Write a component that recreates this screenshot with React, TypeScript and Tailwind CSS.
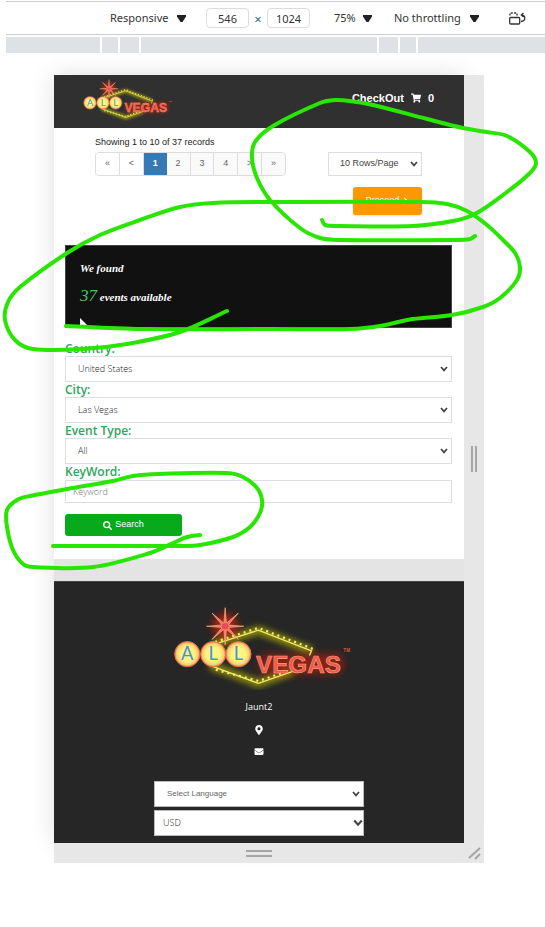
import React, { useId } from "react";
import { FaSearch, FaShoppingCart, FaMapMarkerAlt, FaEnvelope, FaChevronRight } from "react-icons/fa";

type Point = [number, number];

const arial = "font-['Liberation_Sans',Arial,sans-serif]";
const openSans = "font-['Open_Sans',sans-serif]";

function Logo({ className }: { className: string }) {
  const id = useId();
  const yellow = `${id}-yellow`;
  const red = `${id}-red`;
  const bulb = `${id}-bulb`;
  const rays = [0, 45, 90, 135, 180, 225, 270, 315];
  return (
    <svg viewBox="40 20 540 250" className={className} role="img" aria-label="All Vegas">
      <defs>
        <filter id={yellow} x="-20%" y="-30%" width="140%" height="160%">
          <feGaussianBlur stdDeviation="9" />
        </filter>
        <filter id={red} x="-50%" y="-70%" width="200%" height="240%">
          <feGaussianBlur stdDeviation="13" />
        </filter>
        <radialGradient id={bulb}>
          <stop offset="0.55" stopColor="#fdf582" />
          <stop offset="0.85" stopColor="#f8cf70" />
          <stop offset="1" stopColor="#ec7a4c" />
        </radialGradient>
      </defs>
      <g fill="none" stroke="#c6c800" strokeWidth="22" opacity="0.7" filter={`url(#${yellow})`}>
        <path d="M160 133 296 90 456 152" />
        <path d="M150 196 296 250 400 214" />
      </g>
      <circle cx="196" cy="78" r="36" fill="#e02010" opacity="0.8" filter={`url(#${red})`} />
      <rect x="300" y="162" width="250" height="58" rx="20" fill="#d8200c" opacity="0.55" filter={`url(#${red})`} />
      <g fill="none" stroke="#f3e96f" strokeWidth="4">
        <path d="M160 133 296 90 456 152 450 166" />
        <path d="M150 196 296 250 400 214" />
      </g>
      <g fill="none" stroke="#f7e96b" strokeWidth="7" strokeDasharray="6 12">
        <path d="M166 125 296 83 460 146" />
        <path d="M168 209 296 243 388 212" />
      </g>
      {rays.map((angle) => (
        <path
          key={angle}
          d="M192 72 196 22 200 72Z"
          transform={`rotate(${angle} 196 78)`}
          fill="#e8766a"
          stroke="#f0b880"
          strokeWidth="2"
        />
      ))}
      <circle cx="196" cy="78" r="10" fill="#f0465a" />
      {[82, 160, 236].map((cx, i) => (
        <g key={cx}>
          <circle cx={cx} cy="162" r="38" fill={`url(#${bulb})`} stroke="#e8704a" strokeWidth="3" />
          <text x={cx} y="181" textAnchor="middle" fontSize="55" fontFamily="Lato, sans-serif" fill="#4a90dc">
            {"ALL"[i]}
          </text>
        </g>
      ))}
      <text
        x="289"
        y="219"
        fontSize="73"
        fontWeight="700"
        fontFamily="'Liberation Sans', Arial, sans-serif"
        fill="#f4584a"
        stroke="#f2a07c"
        strokeWidth="2"
      >
        VEGAS
      </text>
      <text x="552" y="156" fontSize="14" fontWeight="700" fontFamily="'Liberation Sans', Arial, sans-serif" fill="#d8543c">
        TM
      </text>
    </svg>
  );
}

function Chevron({ className }: { className: string }) {
  return (
    <svg viewBox="0 0 8 6" className={`pointer-events-none absolute ${className}`} fill="none" stroke="#444" aria-hidden="true">
      <path d="M1 1 4 4.400 7 1" strokeWidth="1.700" />
    </svg>
  );
}

function Triangle() {
  return (
    <svg viewBox="0 0 9 7" className="h-[7px] w-[9px]" aria-hidden="true">
      <path d="M0 0H9V1.500L5.500 7H3.500L0 1.500Z" fill="#202124" />
    </svg>
  );
}

function Toolbar() {
  const box = "h-5 w-[43px] rounded-sm border border-[#dadce0] bg-white text-center outline-none";
  return (
    <div className="ml-1.5 flex h-[34px] items-center border-y border-t-[#cbcdd1] border-b-[#cbcdd1] pl-[104px] font-['Noto_Sans',sans-serif] text-[11px] text-[#333]">
      <button className="flex w-24 items-center gap-2 whitespace-nowrap">
        <span className="w-[59px] text-left">Responsive</span>
        <Triangle />
      </button>
      <input aria-label="Width" defaultValue="546" className={box} />
      <span className="w-[18px] pt-1 text-center text-[13px] text-[#2d6a8a]">×</span>
      <input aria-label="Height" defaultValue="1024" className={box} />
      <button className="ml-6 flex w-[60px] items-center gap-[5px]">
        <span className="w-6 text-left">75%</span>
        <Triangle />
      </button>
      <button className="flex w-[115px] items-center gap-[5px] whitespace-nowrap">
        <span className="w-[71px] text-left">No throttling</span>
        <Triangle />
      </button>
      <button aria-label="Rotate">
        <svg viewBox="0 0 17 13" className="h-[13px] w-[17px]" fill="none" stroke="#333" strokeWidth="1.300">
          <rect x="0.700" y="5.500" width="10" height="6.500" rx="1" />
          <path d="M1 3.500V1H8V3.500" strokeDasharray="2 1.300" />
          <path d="M12 9.500C17 9 17 3.500 12.500 3M14.500 1 12.300 3 14.500 5" />
        </svg>
      </button>
    </div>
  );
}

function Ruler() {
  const tick = "w-0.5 bg-white";
  return (
    <div className="mt-0.5 ml-1.5 flex h-4 bg-[#dee1e6]">
      <div className="w-[94px]" />
      <div className={tick} />
      <div className="w-4" />
      <div className={tick} />
      <div className="w-[19px]" />
      <div className={tick} />
      <div className="grow" />
      <div className={tick} />
      <div className="w-[19px]" />
      <div className={tick} />
      <div className="w-4" />
      <div className={tick} />
      <div className="w-[127px]" />
    </div>
  );
}

function Pagination() {
  const items = ["«", "<", "1", "2", "3", "4", ">", "»"];
  return (
    <nav aria-label="Pages" className="flex h-6 w-[191px] overflow-hidden rounded border border-[#ddd] text-[9px] text-[#666]">
      {items.map((item, i) => (
        <button
          key={item}
          className={
            item === "1"
              ? "flex-1 bg-[#337ab7] font-bold text-white"
              : i < 2
                ? "flex-1 border-r border-[#ddd] bg-white"
                : "flex-1 border-r border-[#ddd] bg-[#fafafa] last:border-r-0"
          }
        >
          {item}
        </button>
      ))}
    </nav>
  );
}

function SelectField({ id, label, value }: { id: string; label: string; value: string }) {
  return (
    <div>
      <label htmlFor={id} className="block h-[15px] text-[12px] leading-4 font-semibold text-[#2fa55a]">
        {label}
      </label>
      <div className="relative">
        <select
          id={id}
          className="block h-[26px] w-full appearance-none border border-[#dcdce6] bg-white px-3 text-[9px] font-light text-[#222] outline-none"
        >
          <option>{value}</option>
        </select>
        <Chevron className="top-[10px] right-1 h-[6px] w-2" />
      </div>
    </div>
  );
}

function curve(points: Point[]) {
  let d = `M${points[0][0]} ${points[0][1]}`;
  for (let i = 0; i < points.length - 1; i++) {
    const a = points[Math.max(i - 1, 0)];
    const b = points[i];
    const c = points[i + 1];
    const e = points[Math.min(i + 2, points.length - 1)];
    const size = Math.hypot(c[0] - b[0], c[1] - b[1]) / 3;
    const t1 = Math.hypot(c[0] - a[0], c[1] - a[1]);
    const t2 = Math.hypot(e[0] - b[0], e[1] - b[1]);
    d += `C${b[0] + ((c[0] - a[0]) / t1) * size} ${b[1] + ((c[1] - a[1]) / t1) * size} ${c[0] - ((e[0] - b[0]) / t2) * size} ${c[1] - ((e[1] - b[1]) / t2) * size} ${c[0]} ${c[1]}`;
  }
  return d;
}

const strokes: Point[][] = [
  [[322, 220], [325, 225], [340, 226], [413, 226], [453, 221], [475, 214], [507, 192], [530, 173], [536, 163], [530, 152], [507, 136], [487, 132], [463, 128], [427, 119], [373, 105], [350, 101], [335, 100], [320, 103], [273, 126], [255, 142], [252, 158], [257, 178], [270, 200], [300, 228], [320, 238], [340, 240], [453, 240], [470, 239], [475, 236]],
  [[227, 311], [180, 332], [127, 344], [83, 349], [33, 349], [15, 340], [5, 320], [8, 302], [20, 287], [67, 253], [100, 235], [140, 220], [180, 207], [213, 203], [280, 202], [420, 202], [447, 204], [467, 211], [487, 225], [503, 240], [515, 253], [520, 267], [517, 280], [500, 298], [483, 307], [452, 315], [413, 319], [380, 326], [350, 329], [270, 329], [147, 329], [66, 326]],
  [[200, 535], [187, 537], [173, 543], [150, 553], [93, 567], [33, 567], [23, 564], [13, 550], [7, 527], [7, 510], [17, 500], [30, 496], [73, 488], [113, 481], [133, 476], [160, 474], [227, 473], [243, 477], [257, 488], [262, 500], [260, 513], [250, 527], [233, 537], [200, 545], [180, 546], [53, 546]],
];

function Marker() {
  return (
    <svg viewBox="0 0 545 927" className="pointer-events-none absolute top-0 left-0 h-[927px] w-[545px]" aria-hidden="true">
      {strokes.map((points, i) => (
        <path key={i} d={curve(points)} fill="none" stroke="#28e600" strokeWidth="4" strokeLinecap="round" strokeLinejoin="round" />
      ))}
    </svg>
  );
}

function Device() {
  return (
    <div className={`min-w-0 flex-1 bg-white shadow-[0_0_24px_rgba(0,0,0,0.12)] ${arial}`}>
      <header className="flex h-[53px] items-start justify-between bg-[#303030] pr-[30px] pl-[29px] text-white">
        <Logo className="mt-1 h-[42px] w-[90px]" />
        <a href="#checkout" className="mt-[15px] flex items-center gap-[7px] text-[11px] leading-4 font-bold">
          CheckOut
          <FaShoppingCart className="h-[10px] w-[10px]" />
          <span>0</span>
        </a>
      </header>

      <main className="pr-3 pl-[11px]">
        <div className="flex items-end justify-between pt-2 pr-[30px] pl-[30px]">
          <div>
            <p className="mb-1 text-[9px] leading-3 text-[#222]">Showing 1 to 10 of 37 records</p>
            <Pagination />
          </div>
          <div className="relative">
            <select
              aria-label="Rows per page"
              className="block h-6 w-[94px] appearance-none border border-[#dcdce6] bg-white px-[11px] text-[9px] text-[#444] outline-none"
            >
              <option>10 Rows/Page</option>
            </select>
            <Chevron className="top-[9px] right-1 h-[6px] w-2" />
          </div>
        </div>
        <div className="flex justify-end pt-[11px] pr-[30px]">
          <button className="flex h-7 w-[69px] items-center justify-center gap-1 rounded-[3px] bg-[#ff9800] text-[9px] text-white shadow-sm">
            Proceed
            <FaChevronRight className="h-2 w-[6px]" />
          </button>
        </div>

        <section className="relative mt-[30px] h-[83px] border border-[#444] bg-[#111] px-[14px] pt-[14px] font-['Liberation_Serif',serif] text-[11px] text-white italic">
          <p className="leading-4 font-bold">We found</p>
          <p className="mt-2 leading-6 font-bold">
            <span className="text-[17px] font-normal text-[#4fc45a]">37</span> events available
          </p>
          <svg viewBox="0 0 10 9" className="absolute bottom-0 left-[14px] h-[9px] w-[10px]" aria-hidden="true">
            <path d="M0 0 9 9H0Z" fill="#fff" />
          </svg>
        </section>

        <form className={`mt-[13px] ${openSans}`} onSubmit={(e) => e.preventDefault()}>
          <SelectField id="country" label="Country:" value="United States" />
          <SelectField id="city" label="City:" value="Las Vegas" />
          <SelectField id="type" label="Event Type:" value="All" />
          <label htmlFor="keyword" className="block h-4 text-[12px] leading-4 font-semibold text-[#2fa55a]">
            KeyWord:
          </label>
          <input
            id="keyword"
            placeholder="Keyword"
            className="block h-[23px] w-full border border-[#dcdce6] px-[7px] text-[9px] font-light outline-none placeholder:text-[#777]"
          />
          <button className={`mt-[11px] flex h-[22px] w-[117px] items-center justify-center gap-[3px] rounded-[3px] bg-[#08aa1c] text-[9px] text-white ${arial}`}>
            <FaSearch className="h-[9px] w-[9px]" />
            Search
          </button>
        </form>
      </main>

      <div className="mt-[23px] h-[22px] bg-[#e4e4e4]" />
      <footer className={`flex flex-col items-center border-t border-[#444] bg-[#262626] pt-[25px] pb-[7px] text-white ${openSans}`}>
        <Logo className="ml-2 h-[83px] w-[180px]" />
        <p className="mt-[11px] text-[9px] leading-3">Jaunt2</p>
        <FaMapMarkerAlt className="mt-3 h-[10px] w-[10px]" />
        <FaEnvelope className="mt-3 h-[9px] w-[10px]" />
        <div className="relative mt-[25px] w-[210px]">
          <select
            aria-label="Language"
            className={`block h-[26px] w-full appearance-none border border-[#bbb] bg-white px-3 text-[8px] text-[#666] outline-none ${arial}`}
          >
            <option>Select Language</option>
          </select>
          <Chevron className="top-[10px] right-1 h-[6px] w-2" />
        </div>
        <div className="relative mt-[3px] w-[210px]">
          <select
            aria-label="Currency"
            className="block h-[26px] w-full appearance-none border border-[#bbb] bg-white px-2 text-[9px] font-light text-[#222] outline-none"
          >
            <option>USD</option>
          </select>
          <Chevron className="top-[9px] right-px h-2 w-[10px]" />
        </div>
      </footer>
    </div>
  );
}

export default function App() {
  return (
    <div className="relative min-h-screen overflow-hidden bg-white pt-px">
      <Toolbar />
      <Ruler />
      <div className="mt-[22px] mr-[61px] ml-[54px]">
        <div className="flex">
          <Device />
          <div className="relative flex w-5 items-center justify-center gap-0.5 bg-[#e7e7e7]">
            <div className="h-[26px] w-0.5 bg-[#a6a6a6]" />
            <div className="h-[26px] w-0.5 bg-[#a6a6a6]" />
          </div>
        </div>
        <div className="relative flex h-5 bg-[#e7e7e7]">
          <div className="flex grow flex-col items-center justify-center gap-[3px]">
            <div className="h-0.5 w-[26px] bg-[#a6a6a6]" />
            <div className="h-0.5 w-[26px] bg-[#a6a6a6]" />
          </div>
          <svg viewBox="0 0 20 20" className="h-5 w-5" stroke="#a6a6a6" strokeWidth="2" aria-hidden="true">
            <path d="M5 15 16 5M11 16 16 11" />
          </svg>
        </div>
      </div>
      <Marker />
    </div>
  );
}
